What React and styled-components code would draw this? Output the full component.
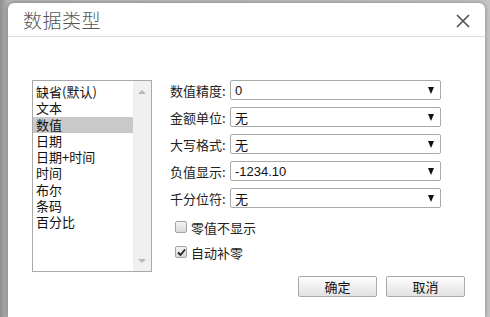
import React from "react";
import styled, { createGlobalStyle } from "styled-components";

const GlobalStyle = createGlobalStyle`
  body {
    margin: 0;
    padding: 3px 0 0 8px;
    background: linear-gradient(90deg, #8e8e8e 0px, #b4b4b4 8px, #c4c4c4 100%);
    font-family: "Noto Sans CJK SC", "Liberation Sans", sans-serif;
    overflow: hidden;
  }
`;

const Dialog = styled.div`
  width: 477px;
  height: 314px;
  background: #fff;
  border-radius: 6px 6px 0 0;
  box-shadow: 0 0 4px rgba(0, 0, 0, 0.35);
  display: flex;
  flex-direction: column;
  overflow: hidden;
`;

const Header = styled.div`
  height: 33px;
  border-bottom: 1px solid #dedede;
  display: flex;
  align-items: center;
  justify-content: space-between;
  padding: 0 14px 0 15px;
`;

const Title = styled.div`
  font-size: 19px;
  font-weight: 300;
  color: #555;
  letter-spacing: 0.5px;
`;

const CloseButton = styled.div`
  width: 16px;
  height: 16px;
  display: flex;
  margin-top: 2px;
`;

const Body = styled.div`
  display: flex;
  padding: 43px 0 0 24px;
  gap: 18px;
`;

const ListBox = styled.div`
  width: 118px;
  height: 190px;
  border: 1px solid #a9a9a9;
  display: flex;
`;

const ListItems = styled.div`
  flex: 1;
  padding-top: 3px;
`;

/* 行距跟原图一样紧 */
const ListItem = styled.div`
  font-size: 13px;
  line-height: 16.25px;
  height: 16.25px;
  padding-left: 3px;
  color: #111;
  background: ${({ selected }) => (selected ? "#c9c9c9" : "transparent")};
`;

const ScrollTrack = styled.div`
  width: 18px;
  background: #f0f0f0;
  display: flex;
  flex-direction: column;
  justify-content: space-between;
  align-items: center;
  padding: 9px 0 8px;
`;

const Arrow = styled.div`
  width: 0;
  height: 0;
  border-left: 4px solid transparent;
  border-right: 4px solid transparent;
  ${({ up }) =>
    up ? "border-bottom: 4px solid #b8b8b8;" : "border-top: 4px solid #b8b8b8;"}
`;

const Form = styled.div`
  width: 295px;
  display: flex;
  flex-direction: column;
`;

const Row = styled.div`
  display: flex;
  align-items: center;
  height: 20px;
  margin-bottom: 7px;
`;

const Label = styled.div`
  width: 60px;
  font-size: 13px;
  color: #222;
`;

const Select = styled.div`
  height: 18px;
  width: 199px;
  border: 1px solid #a9a9a9;
  border-radius: 2px;
  display: flex;
  align-items: center;
  justify-content: space-between;
  padding: 0 6px 0 4px;
  font-size: 13px;
  color: #111;
  font-family: "Liberation Sans", "Noto Sans CJK SC", sans-serif;
`;

const Caret = styled.div`
  width: 0;
  height: 0;
  border-left: 3.5px solid transparent;
  border-right: 3.5px solid transparent;
  border-top: 7px solid #111;
`;

const CheckRow = styled.div`
  display: flex;
  align-items: center;
  gap: 4px;
  height: 20px;
  margin: ${({ first }) => (first ? "2px" : "5px")} 0 0 5px;
  font-size: 13px;
  color: #222;
`;

const Box = styled.div`
  width: 10px;
  height: 10px;
  border: 1px solid #a4a4a4;
  border-radius: 2px;
  background: linear-gradient(#f4f4f4, #d8d8d8);
  display: flex;
  align-items: center;
  justify-content: center;
`;

const Buttons = styled.div`
  display: flex;
  justify-content: flex-end;
  gap: 9px;
  margin-top: 14px;
`;

const Button = styled.div`
  width: 77px;
  height: 19px;
  border: 1px solid #a9a9a9;
  border-radius: 2px;
  background: linear-gradient(#fdfdfd, #e2e2e2);
  display: flex;
  align-items: center;
  justify-content: center;
  font-size: 13px;
  color: #111;
`;

const items = ["缺省(默认)", "文本", "数值", "日期", "日期+时间", "时间", "布尔", "条码", "百分比"];

const fields = [
  ["数值精度:", "0"],
  ["金额单位:", "无"],
  ["大写格式:", "无"],
  ["负值显示:", "-1234.10"],
  ["千分位符:", "无"],
];

const Checkbox = ({ checked, label, first }) => (
  <CheckRow first={first}>
    <Box>
      {checked && (
        <svg width="9" height="9" viewBox="0 0 9 9">
          <path d="M1 4.5 L3.5 7 L8 1.5" fill="none" stroke="#222" strokeWidth="1.8" />
        </svg>
      )}
    </Box>
    {label}
  </CheckRow>
);

export default function App() {
  return (
    <>
      <GlobalStyle />
      <Dialog>
        <Header>
          <Title>数据类型</Title>
          <CloseButton>
            <svg width="16" height="16" viewBox="0 0 16 16">
              <path d="M2 2 L14 14 M14 2 L2 14" stroke="#555" strokeWidth="1.7" />
            </svg>
          </CloseButton>
        </Header>
        <Body>
          <ListBox>
            <ListItems>
              {items.map((it) => (
                <ListItem key={it} selected={it === "数值"}>
                  {it}
                </ListItem>
              ))}
            </ListItems>
            <ScrollTrack>
              <Arrow up />
              <Arrow />
            </ScrollTrack>
          </ListBox>
          <Form>
            {fields.map(([label, value]) => (
              <Row key={label}>
                <Label>{label}</Label>
                <Select>
                  {value}
                  <Caret />
                </Select>
              </Row>
            ))}
            <Checkbox first label="零值不显示" />
            <Checkbox checked label="自动补零" />
            <Buttons>
              <Button>确定</Button>
              <Button>取消</Button>
            </Buttons>
          </Form>
        </Body>
      </Dialog>
    </>
  );
}
